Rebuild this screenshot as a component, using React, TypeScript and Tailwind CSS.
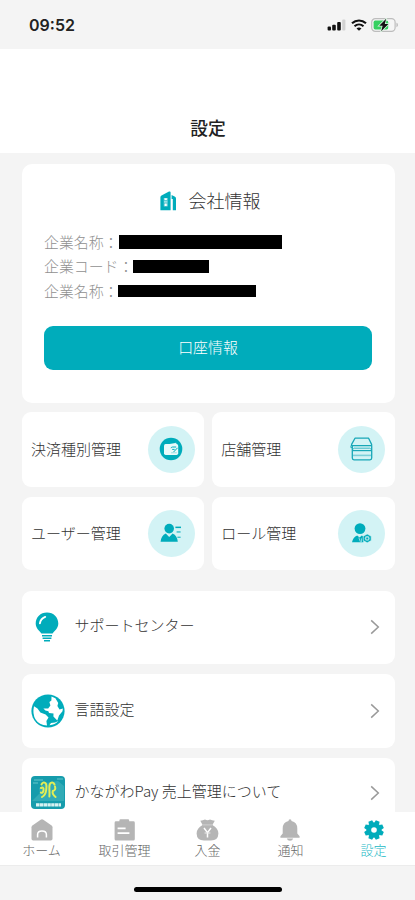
import React from "react";

const TEAL = "#00acbb";

type IconProps = { className?: string };

function SignalIcon() {
  return (
    <svg width="20" height="12" viewBox="0 0 20 12">
      <rect x="0.6" y="7.6" width="3.4" height="4" rx="1" fill="#111" />
      <rect x="5.2" y="5.8" width="3.6" height="5.8" rx="1" fill="#111" />
      <rect x="10.2" y="3" width="3.6" height="8.6" rx="1" fill="#111" />
      <rect x="15.2" y="0.6" width="3.2" height="11" rx="1" fill="#d2d2d2" />
    </svg>
  );
}

function WifiIcon() {
  return (
    <svg width="16" height="12" viewBox="0 0 16 12" fill="none" stroke="#111">
      <path d="M1 4.3C5 0.5 11 0.5 15 4.3" strokeWidth="2.1" />
      <path d="M3.5 7.2C6.1 4.8 9.9 4.8 12.5 7.2" strokeWidth="2" />
      <path d="M8 11.8 5.5 9.4C6.9 8.2 9.1 8.2 10.5 9.4Z" fill="#111" stroke="none" />
    </svg>
  );
}

function BatteryIcon() {
  return (
    <svg width="28" height="14" viewBox="0 0 28 14">
      <rect x="0.7" y="0.7" width="23.4" height="12.6" rx="3.6" fill="#f6f6f6" stroke="#bdbdbd" strokeWidth="1.2" />
      <path d="M25.5 4.8C27.3 5.4 27.3 8.6 25.5 9.2Z" fill="#b5b5b5" />
      <rect x="2.6" y="2.6" width="14.6" height="8.8" rx="1.6" fill="#35d060" />
      <path d="M15.2 0.8 8.2 7.8H11.6L10.2 13.2 17.4 6H13.8Z" fill="#111" stroke="#d9f5e0" strokeWidth="1.6" paintOrder="stroke" />
    </svg>
  );
}

function BuildingIcon() {
  return (
    <svg width="17" height="20" viewBox="0 0 17 20" fill={TEAL}>
      <path d="M0.4 6.2Q0.4 5 1.5 4.5L9 0.6Q10.6 0 10.6 1.5V19.3H0.4Z" />
      <path d="M11.6 4 14.6 5.5Q16 6.2 16 7.5V19.3H12.8V8H11.6Z" />
      <rect x="3.8" y="7" width="3.8" height="8.4" fill="#9adde3" />
      <path d="M3.8 9.4H7.6M3.8 12.2H7.6" stroke="#35bcc8" strokeWidth="0.8" />
      <rect x="5" y="12.6" width="1.6" height="2.4" fill="#fff" />
      <rect x="4.8" y="7.4" width="2" height="1.7" fill="#fff" />
    </svg>
  );
}

function WalletIcon() {
  return (
    <svg width="24" height="24" viewBox="0 0 24 24">
      <circle cx="12" cy="12" r="11.3" fill={TEAL} />
      <path d="M5.3 8 17.2 5.7 17.8 8" fill="#d3f3f5" />
      <rect x="5" y="7" width="14.2" height="11" rx="1.7" fill="#e9fafa" />
      <path d="M17.2 10H13.6Q12 10.2 12 11.2M13.2 12.4H15.6M14.4 15.2 18.6 10.8" fill="none" stroke={TEAL} strokeWidth="1" />
      <path d="M12 15.8H17.8" stroke="#8bd6dd" strokeWidth="0.8" />
    </svg>
  );
}

function StoreIcon() {
  return (
    <svg width="24" height="24" viewBox="0 0 24 24" fill="none" stroke="#18a7b7" strokeWidth="1.3" strokeLinejoin="round">
      <path d="M5 1.2H18.6L21.6 7.4V8.6H1.6V7.4ZM2.3 8.6V21Q2.3 22.8 4 22.8H20Q21.7 22.8 21.7 21V8.6" />
      <path d="M0.9 8.6V10.6H2.3" strokeWidth="0.9" />
      <path d="M2.3 12.8 4.2 11.2H19.8L21.7 12.8" strokeWidth="0.8" />
      <path d="M2.5 13.6H21.5" strokeWidth="1.2" />
      <path d="M3 18.4H21" strokeWidth="1.6" stroke="#7ccfd9" />
    </svg>
  );
}

function UserListIcon() {
  return (
    <svg width="22" height="20" viewBox="0 0 22 20" fill={TEAL}>
      <circle cx="9.2" cy="5.6" r="4.8" />
      <path d="M0.6 18.8Q1 12.6 5.8 10.4L9.2 14 12.6 10.4Q17.4 12.6 17.8 18.8Z" />
      <rect x="15.4" y="3.6" width="5.6" height="1.5" />
      <rect x="16.6" y="8.2" width="4" height="1.5" opacity=".7" />
      <rect x="17.4" y="13.6" width="3.2" height="1.4" opacity=".7" />
    </svg>
  );
}

function UserRoleIcon() {
  return (
    <svg width="22" height="22" viewBox="0 0 22 22">
      <g fill={TEAL}>
        <circle cx="9" cy="6.6" r="5.4" />
        <path d="M1 20.2Q2 15.2 6.2 13.4L8.6 15.6 10.8 13.6 12.4 14.4V20.2Z" />
      </g>
      <path d="M16.2 12 20.2 14.2V18.6L16.2 20.8 12.2 18.6V14.2Z" fill={TEAL} stroke="#d3f3f5" strokeWidth="0.6" />
      <circle cx="16.2" cy="16.4" r="2.4" fill="#a6e2e7" />
      <circle cx="16.2" cy="16.4" r="1" fill={TEAL} />
      <path d="M7.8 15.6 9.4 19.8M10.4 16.4V20" stroke="#9cdfe5" strokeWidth="0.9" />
    </svg>
  );
}

function BulbIcon() {
  return (
    <svg width="24" height="30" viewBox="0 0 24 30" className="mr-[2px]">
      <path d="M12 0.4C5.4 0.4 0.7 5.3 0.7 11.4C0.7 16.6 4.7 18.5 6.4 21.6H17.6C19.3 18.5 23.3 16.6 23.3 11.4C23.3 5.3 18.6 0.4 12 0.4Z" fill={TEAL} />
      <path d="M4.9 11.3Q5.6 6.6 10.2 4.9" fill="none" stroke="#fff" strokeWidth="1.9" strokeLinecap="round" />
      <path d="M7 23.7H17M7.6 26.2H16.4M9 28.7H15" stroke={TEAL} strokeWidth="1.5" />
    </svg>
  );
}

function GlobeIcon() {
  return (
    <svg width="34" height="34" viewBox="0 0 34 34">
      <circle cx="17" cy="17" r="16.6" fill={TEAL} />
      <path d="M3 12.3 6.5 14.6 9.4 18.6 14.6 20.6 17.5 23.5 15.4 27 16 31.5Q8 31 4.6 25.5Q1.2 20 3 12.3Z" fill="#fff" />
      <path d="M20.5 2.5 24.4 4.2 27.2 9 26.4 12 28.5 15.5 31.9 14.5 31.5 17.2 28 21.5 26.3 26.5 22.4 22.4 22.5 19.6 18 19 17.4 17.2 14.4 16.4 12.4 14.6 17.2 14.4 19.4 11.4 18.4 8 20.4 6.6Z" fill="#fff" />
      <path d="M18.5 31.3Q24 30.8 27.4 27.1L24 28.4 20 29Z" fill="#fff" />
    </svg>
  );
}

function PayLogo() {
  return (
    <svg width="34" height="33" viewBox="0 0 34 33">
      <rect width="34" height="33" rx="4" fill="#169cac" />
      <path d="M1 25 9 17 8 12 15 7 27 5 33 10V25Z" fill="#49b8bf" opacity=".55" />
      <path d="M3 4H12M26 3H32M2 7H7" stroke="#65c8cc" strokeWidth="1.2" />
      <g fill="none" stroke="#e3ee55" strokeWidth="2" strokeLinecap="round">
        <path d="M10.5 8.5Q12 5.5 14.4 7Q16 8.5 15.2 14Q14.6 19 11 21" />
        <path d="M23.5 8.5Q22 5.5 19.6 7Q18 8.5 18.4 14Q18.6 18 18.4 20.5" />
        <path d="M10 12Q13 10.5 12.5 14.5Q12 17.4 9.8 16.6" />
        <path d="M24 10.5Q25.2 14 21.8 15Q20.8 18 24.6 21" />
      </g>
      <path d="M5 28.8H30" stroke="#d8f2f2" strokeWidth="3.2" strokeDasharray="3.4 .4" />
    </svg>
  );
}

function HomeIcon() {
  return (
    <svg width="22" height="22" viewBox="0 0 22 22">
      <path d="M0.5 8.2Q0.5 7.2 1.4 6.5L9.7 0.7Q11 -0.1 12.3 0.7L20.6 6.5Q21.5 7.2 21.5 8.2V19.8Q21.5 21.5 19.8 21.5H2.2Q0.5 21.5 0.5 19.8Z" fill="#b5b5b5" />
      <path d="M6.6 18.6V15.6Q6.6 12 11 12Q15.4 12 15.4 15.6V18.6" fill="none" stroke="#fff" strokeWidth="1.5" />
    </svg>
  );
}

function ClipboardIcon() {
  return (
    <svg width="22" height="22" viewBox="0 0 22 22">
      <path d="M2 2.3H5.4V1.4Q5.4 .3 6.6 .3H14Q15.2 .3 15.2 1.4V2.3H19.4Q20.8 2.3 20.8 3.7V20Q20.8 21.5 19.4 21.5H2Q.6 21.5 .6 20V3.7Q.6 2.3 2 2.3Z" fill="#b5b5b5" />
      <path d="M3.6 9.3H11.6M3.6 14.2H15.4" stroke="#fff" strokeWidth="1.7" />
    </svg>
  );
}

function MoneyBagIcon() {
  return (
    <svg width="23" height="22" viewBox="0 0 23 22">
      <path d="M4.3 1.8Q7 1.2 9 .5Q11.5 2 14 .5Q16 1.2 18.8 1.8L16.4 6Q22.3 9 22.4 14.5Q22.2 21.5 15 21.5H8Q.8 21.5 .6 14.5Q.7 9 6.6 6Z" fill="#b5b5b5" />
      <path d="M8 9 11.5 13.6 15 9M11.5 13V18.4" fill="none" stroke="#fff" strokeWidth="1.5" />
      <path d="M8.6 14H14.4" stroke="#eee" strokeWidth="1" />
      <path d="M6.8 5.9H16.2" stroke="#d6d6d6" strokeWidth=".8" />
    </svg>
  );
}

function BellIcon() {
  return (
    <svg width="20" height="22" viewBox="0 0 20 22" fill="#b5b5b5" className="-ml-[2px]">
      <path d="M8.5 1.9Q8.5 .3 10 .3Q11.5 .3 11.5 1.9Q17.3 3 17.3 9.5V14.5L19.6 17.3V18.7H.4V17.3L2.7 14.5V9.5Q2.7 3 8.5 1.9Z" />
      <path d="M6.8 19.5H13.2Q12.5 21.7 10 21.7Q7.5 21.7 6.8 19.5Z" />
    </svg>
  );
}

function GearIcon() {
  return (
    <svg width="20" height="20" viewBox="0 0 20 20">
      <g fill={TEAL}>
        <circle cx="10" cy="10" r="7.5" />
        {[22.5, 67.5, 112.5, 157.5, 202.5, 247.5, 292.5, 337.5].map((a) => (
          <path key={a} d="M7.4 3.5 8 .2H12L12.6 3.5Z" transform={`rotate(${a} 10 10)`} />
        ))}
      </g>
      <circle cx="10" cy="10" r="2.8" fill="#fff" />
    </svg>
  );
}

function Chevron({ className }: IconProps) {
  return (
    <svg className={className} width="10" height="16" viewBox="0 0 10 16" fill="none" stroke="#999" strokeWidth="1.5">
      <path d="M1.2 1.4 8.3 8 1.2 14.6" />
    </svg>
  );
}

function InfoRow({ label, bar }: { label: string; bar: string }) {
  return (
    <div className="flex h-[24.3px] items-center">
      <span className="whitespace-nowrap">{label}</span>
      <span className={`shrink-0 bg-black ${bar}`} />
    </div>
  );
}

function Tile({ label, icon }: { label: string; icon: React.ReactNode }) {
  return (
    <div className="flex items-center justify-between rounded-[9px] bg-white pr-[9.5px] pl-[9.5px]">
      <span className="whitespace-nowrap">{label}</span>
      <span className="flex size-[47px] items-center justify-center rounded-full bg-[#d3f3f5]">{icon}</span>
    </div>
  );
}

function ListRow({ label, icon, className }: { label: string; icon: React.ReactNode; className?: string }) {
  return (
    <div className={`flex h-[73.5px] shrink-0 items-center rounded-[9px] bg-white pr-[15px] pl-[9px] ${className ?? ""}`}>
      <span className="flex w-[34px] justify-center">{icon}</span>
      <span className="ml-[10px] flex-1 pb-[4px] whitespace-nowrap">{label}</span>
      <Chevron />
    </div>
  );
}

function NavItem({ label, icon, active }: { label: string; icon: React.ReactNode; active?: boolean }) {
  return (
    <div className={`flex flex-1 flex-col items-center text-[13px] leading-[18px] ${active ? "text-[#22b8c5]" : "text-[#666]"}`}>
      <span className="flex h-[22px] items-center">{icon}</span>
      <span>{label}</span>
    </div>
  );
}

export default function App() {
  return (
    <div
      lang="ja"
      className="flex h-[900px] w-[415px] flex-col overflow-hidden bg-[#f4f4f4] font-['Noto_Sans_CJK_JP',sans-serif] text-[15px] leading-[22px] font-light text-[#333]"
    >
      <div className="flex h-[49px] shrink-0 items-center justify-between pt-[1px] pr-[16px] pl-[29px]">
        <span className="font-['Inter',sans-serif] text-[16px] font-semibold text-[#222]">09:52</span>
        <div className="flex items-center gap-[4px]">
          <SignalIcon />
          <WifiIcon />
          <BatteryIcon />
        </div>
      </div>

      <header className="flex h-[104px] shrink-0 items-end justify-center bg-white pb-[15px] pl-px text-[17.8px] font-medium text-[#222]">
        設定
      </header>

      <main className="flex h-[659px] shrink-0 flex-col overflow-hidden pt-[11px] pr-[20.5px] pl-[21.5px]">
        <section className="flex h-[238.5px] shrink-0 flex-col rounded-[10px] bg-white px-[22.5px] pt-[25px]">
          <h2 className="flex items-center justify-center gap-[12px] pl-[4px] text-[18px]">
            <BuildingIcon />
            <span className="pb-[2px]">会社情報</span>
          </h2>
          <div className="mt-[17px] text-[14.9px] text-[#909090]">
            <InfoRow label="企業名称：" bar="ml-[0.5px] h-[14.5px] w-[163px]" />
            <InfoRow label="企業コード：" bar="-ml-[0.5px] h-[12.5px] w-[76px]" />
            <InfoRow label="企業名称：" bar="h-[12px] w-[138px]" />
          </div>
          <button className="mt-[23.5px] flex h-[43.5px] items-center justify-center rounded-[9px] bg-[#00acbb] pb-[2px] text-[14.9px] text-white">
            口座情報
          </button>
        </section>

        <section className="mt-[9.5px] grid shrink-0 grid-cols-2 grid-rows-[74.5px_73.5px] gap-x-[7.5px] gap-y-[10px]">
          <Tile label="決済種別管理" icon={<WalletIcon />} />
          <Tile label="店舗管理" icon={<StoreIcon />} />
          <Tile label="ユーザー管理" icon={<UserListIcon />} />
          <Tile label="ロール管理" icon={<UserRoleIcon />} />
        </section>

        <section className="mt-[20.5px] flex shrink-0 flex-col gap-[10px]">
          <ListRow label="サポートセンター" icon={<BulbIcon />} />
          <ListRow label="言語設定" icon={<GlobeIcon />} />
          <ListRow label="かながわPay 売上管理について" icon={<PayLogo />} className="pb-[3px]" />
        </section>
      </main>

      <nav className="flex h-[53px] shrink-0 bg-white pt-[7px]">
        <NavItem label="ホーム" icon={<HomeIcon />} />
        <NavItem label="取引管理" icon={<ClipboardIcon />} />
        <NavItem label="入金" icon={<MoneyBagIcon />} />
        <NavItem label="通知" icon={<BellIcon />} />
        <NavItem label="設定" icon={<GearIcon />} active />
      </nav>

      <footer className="flex h-[35px] justify-center border-t border-[#ececec] pt-[21px]">
        <div className="h-[5px] w-[148px] rounded-full bg-black" />
      </footer>
    </div>
  );
}
